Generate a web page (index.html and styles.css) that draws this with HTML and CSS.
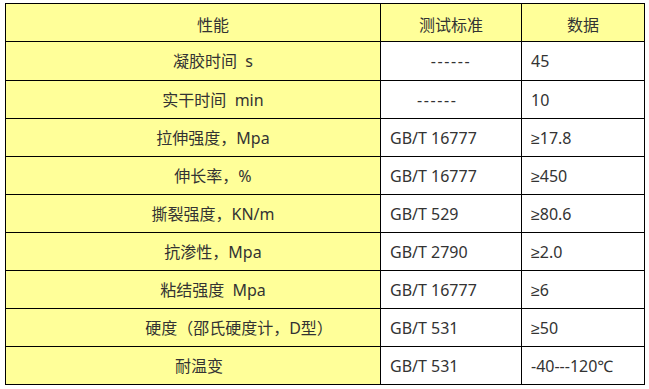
FILE: index.html
```html
<!DOCTYPE html>
<html lang="zh-CN">
<head>
<meta charset="utf-8">
<title>性能参数</title>
<link rel="stylesheet" href="styles.css">
</head>
<body>
<table class="spec">
  <colgroup>
    <col class="c1">
    <col class="c2">
    <col class="c3">
  </colgroup>
  <tr class="head">
    <td class="prop">性能</td>
    <td class="center">测试标准</td>
    <td class="center">数据</td>
  </tr>
  <tr class="tall">
    <td class="prop">凝胶时间&nbsp;&nbsp;s</td>
    <td class="center"><span class="dash">------</span></td>
    <td>45</td>
  </tr>
  <tr>
    <td class="prop">实干时间&nbsp;&nbsp;min</td>
    <td class="dash-left"><span class="dash">------</span></td>
    <td>10</td>
  </tr>
  <tr>
    <td class="prop">拉伸强度，Mpa</td>
    <td>GB/T 16777</td>
    <td>≥17.8</td>
  </tr>
  <tr>
    <td class="prop">伸长率，%</td>
    <td>GB/T 16777</td>
    <td>≥450</td>
  </tr>
  <tr>
    <td class="prop">撕裂强度，KN/m</td>
    <td>GB/T 529</td>
    <td>≥80.6</td>
  </tr>
  <tr>
    <td class="prop">抗渗性，Mpa</td>
    <td>GB/T 2790</td>
    <td>≥2.0</td>
  </tr>
  <tr>
    <td class="prop">粘结强度&nbsp;&nbsp;Mpa</td>
    <td>GB/T 16777</td>
    <td>≥6</td>
  </tr>
  <tr>
    <td class="prop prop-wide">硬度（邵氏硬度计，D型）</td>
    <td>GB/T 531</td>
    <td>≥50</td>
  </tr>
  <tr>
    <td class="prop prop-short">耐温变</td>
    <td>GB/T 531</td>
    <td>-40---120℃</td>
  </tr>
</table>
</body>
</html>
```

FILE: styles.css
```css
html, body {
  background: #ffffff;
}

body {
  margin: 3px 0 0 5px;
  font-family: "Noto Sans", "Liberation Sans", "Noto Sans CJK SC", sans-serif;
  font-size: 16px;
  line-height: 20px;
  color: #333333;
}

.spec {
  border-collapse: collapse;
  table-layout: fixed;
  width: 639px;
}

.c1 { width: 375px; }
.c2 { width: 141px; }
.c3 { width: 123px; }

.spec td {
  border: 1px solid #000000;
  height: 37px;
  padding: 0 4px 0 9px;
  vertical-align: middle;
  white-space: nowrap;
}

.spec .head td {
  background: #ffff99;
  text-align: center;
  height: 33px;
  padding-top: 4px;
}

.spec .tall td {
  height: 38px;
}

.spec td.prop {
  background: #ffff99;
  text-align: center;
  padding-left: 40px;
  padding-right: 0;
}

.spec td.prop-wide {
  padding-left: 92px;
}

.spec td.prop-short {
  padding-right: 28px;
}

.spec td.center {
  text-align: center;
  padding-left: 4px;
}

.spec td.dash-left {
  padding-left: 36px;
}

.dash {
  letter-spacing: 1.6px;
}
```
